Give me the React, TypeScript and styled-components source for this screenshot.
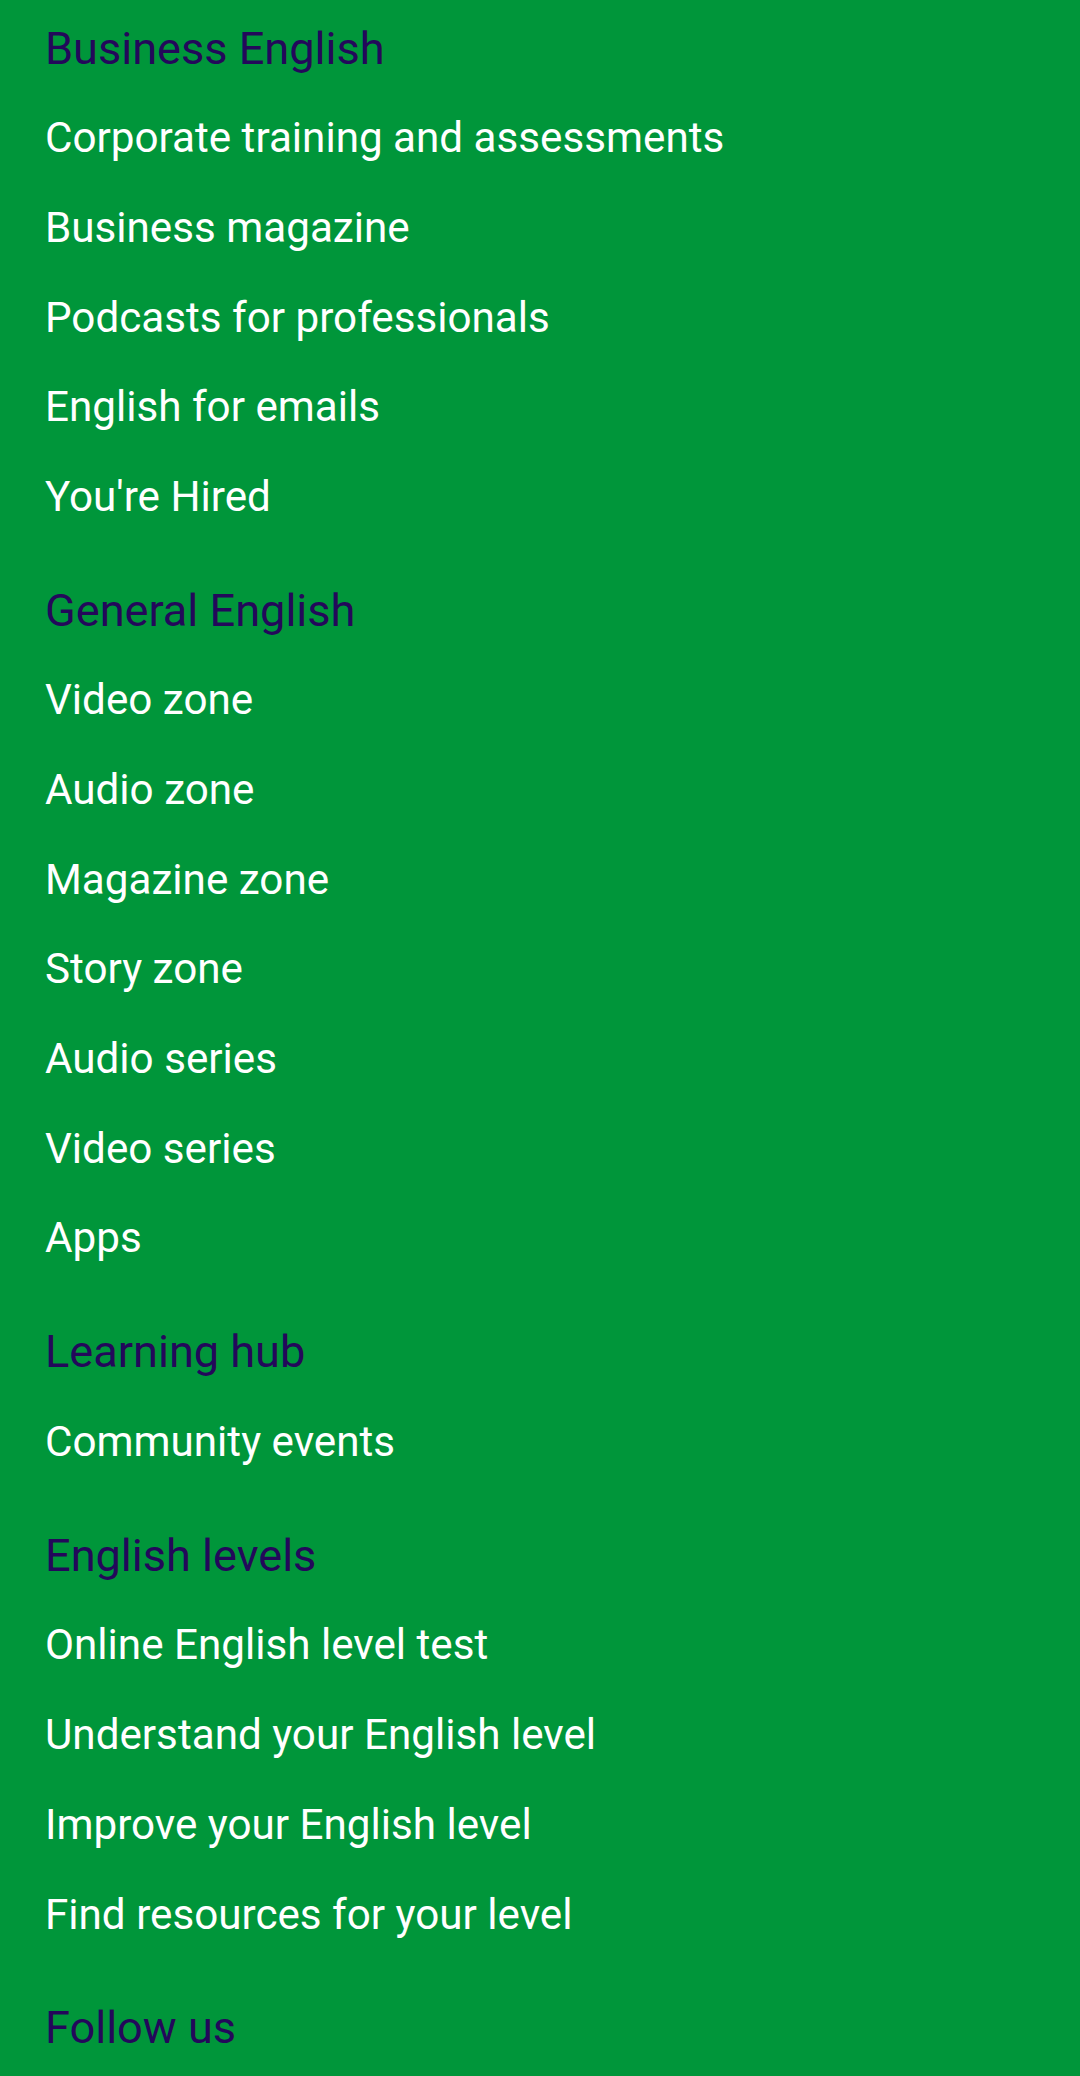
import React from "react";
import styled, { createGlobalStyle } from "styled-components";

const GlobalStyle = createGlobalStyle`
  html, body {
    margin: 0;
    padding: 0;
    background: #00963a;
  }
  body {
    font-family: Roboto, "Noto Sans", "Liberation Sans", sans-serif;
    -webkit-font-smoothing: antialiased;
  }
`;

const Footer = styled.footer`
  min-height: 2076px;
  box-sizing: border-box;
  background: #00963a;
  padding: 3.5px 45px 0 45px;
  display: flex;
  flex-direction: column;
  gap: 24.2px;
`;

const Section = styled.section`
  display: flex;
  flex-direction: column;
`;

const Heading = styled.h3`
  margin: 0;
  height: 89.68px;
  line-height: 89.68px;
  font-size: 45.1px;
  font-weight: 400;
  color: #23085a;
  white-space: nowrap;
`;

const LinkList = styled.ul`
  list-style: none;
  margin: 0;
  padding: 0;
  display: flex;
  flex-direction: column;
`;

const LinkItem = styled.li`
  height: 89.68px;
  line-height: 89.68px;
`;

const FooterLink = styled.a`
  font-size: 42.2px;
  font-weight: 400;
  color: #ffffff;
  text-decoration: none;
  white-space: nowrap;
`;

type Group = { title: string; links: string[] };

const groups: Group[] = [
  {
    title: "Business English",
    links: [
      "Corporate training and assessments",
      "Business magazine",
      "Podcasts for professionals",
      "English for emails",
      "You're Hired",
    ],
  },
  {
    title: "General English",
    links: [
      "Video zone",
      "Audio zone",
      "Magazine zone",
      "Story zone",
      "Audio series",
      "Video series",
      "Apps",
    ],
  },
  {
    title: "Learning hub",
    links: ["Community events"],
  },
  {
    title: "English levels",
    links: [
      "Online English level test",
      "Understand your English level",
      "Improve your English level",
      "Find resources for your level",
    ],
  },
  {
    title: "Follow us",
    links: [],
  },
];

export default function App() {
  return (
    <>
      <GlobalStyle />
      <Footer>
        {groups.map((g) => (
          <Section key={g.title}>
            <Heading>{g.title}</Heading>
            {g.links.length > 0 && (
              <LinkList>
                {g.links.map((l) => (
                  <LinkItem key={l}>
                    <FooterLink href="#">{l}</FooterLink>
                  </LinkItem>
                ))}
              </LinkList>
            )}
          </Section>
        ))}
      </Footer>
    </>
  );
}
